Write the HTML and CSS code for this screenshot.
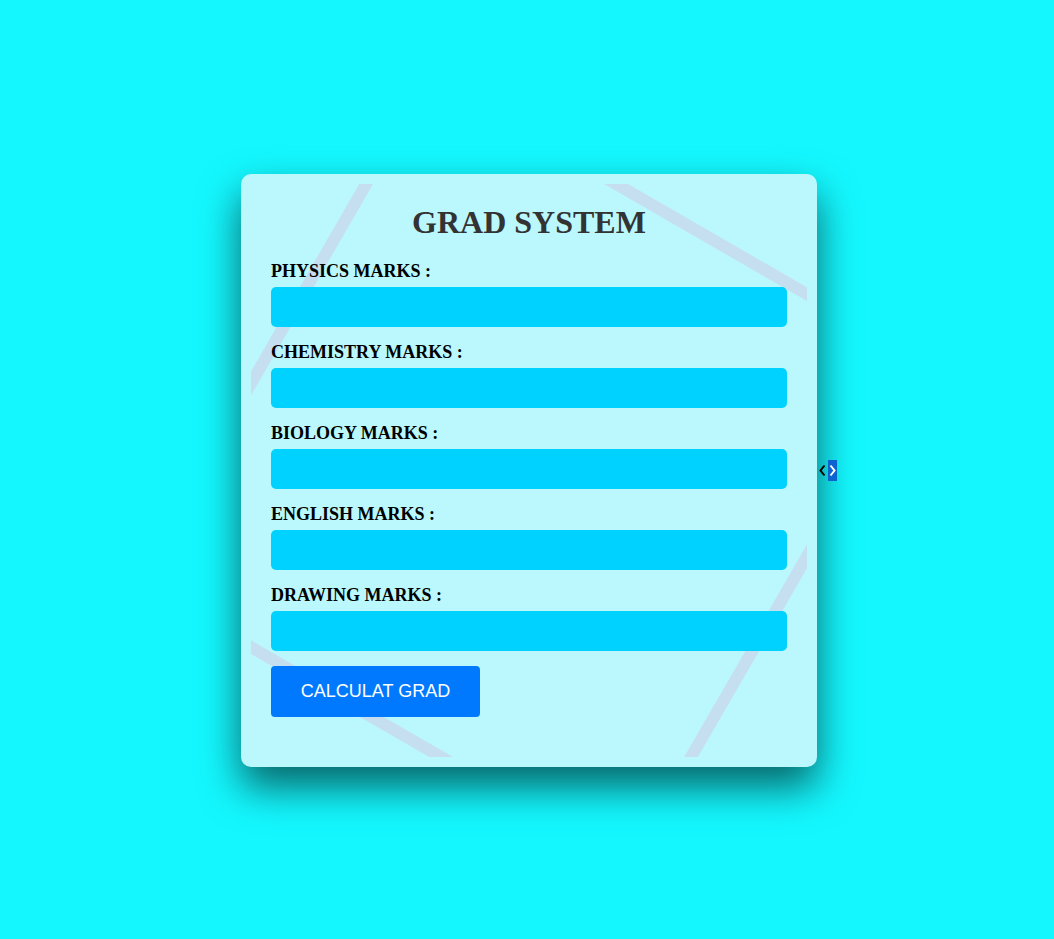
FILE: index.html
```html
<!DOCTYPE html>
<html lang="en">
<head>
<meta charset="utf-8">
<title>Grad System</title>
<link rel="stylesheet" href="styles.css">
</head>
<body>
<main class="page">
  <div class="card">
    <div class="deco">
      <svg class="deco-svg" viewBox="0 0 556 573" width="556" height="573" aria-hidden="true">
        <g stroke="#c6dff0" stroke-width="12" fill="none">
          <line x1="215" y1="-173" x2="-185" y2="520"/>
          <line x1="105" y1="-150" x2="625" y2="150"/>
          <line x1="-260" y1="313" x2="346" y2="663"/>
          <line x1="340" y1="746" x2="640" y2="227"/>
        </g>
      </svg>
    </div>
    <form class="form">
      <h1 class="title">GRAD SYSTEM</h1>
      <label class="label">PHYSICS MARKS :</label>
      <input class="field" type="text">
      <label class="label">CHEMISTRY MARKS :</label>
      <input class="field" type="text">
      <label class="label">BIOLOGY MARKS :</label>
      <input class="field" type="text">
      <label class="label">ENGLISH MARKS :</label>
      <input class="field" type="text">
      <label class="label">DRAWING MARKS :</label>
      <input class="field" type="text">
      <button class="btn" type="button">CALCULAT GRAD</button>
    </form>
    <span class="arrows">
      <svg class="arr-l" width="11" height="21" viewBox="0 0 11 21" aria-hidden="true"><polyline points="7.5,5.5 3.5,10.5 7.5,15.5" fill="none" stroke="#000" stroke-width="2"/></svg>
      <svg class="arr-r" width="9" height="21" viewBox="0 0 9 21" aria-hidden="true"><polyline points="2.5,5.5 6.5,10.5 2.5,15.5" fill="none" stroke="#fff" stroke-width="2"/></svg>
    </span>
  </div>
</main>
</body>
</html>
```
FILE: styles.css
```css
html, body {
  margin: 0;
  padding: 0;
  height: 100%;
}
body {
  background: #14f7fe;
  font-family: "Liberation Serif", "Times New Roman", serif;
}
.page {
  height: 939px;
  display: flex;
  align-items: center;
  justify-content: center;
  padding-left: 4px;
  padding-top: 2px;
  box-sizing: border-box;
}
.card {
  position: relative;
  width: 576px;
  box-sizing: border-box;
  padding: 30px 30px 50px;
  background: #bbf8fe;
  border-radius: 10px;
  box-shadow: 0 20px 40px rgba(0, 0, 0, 0.6);
}
.deco {
  position: absolute;
  left: 10px;
  top: 10px;
  right: 10px;
  bottom: 10px;
  overflow: hidden;
}
.deco-svg {
  display: block;
}
.form {
  position: relative;
  display: flex;
  flex-direction: column;
  align-items: stretch;
  margin: 0;
}
.title {
  margin: 0 0 21px;
  font-size: 32px;
  line-height: 36px;
  font-weight: bold;
  text-align: center;
  color: #333333;
}
.label {
  display: block;
  font-size: 18px;
  line-height: 20px;
  font-weight: bold;
  color: #000;
  margin-bottom: 6px;
}
.field {
  display: block;
  height: 40px;
  box-sizing: border-box;
  border: none;
  border-radius: 5px;
  background: #00d2ff;
  margin: 0 0 15px;
  padding: 0 10px;
  font-size: 16px;
  outline: none;
}
.btn {
  align-self: flex-start;
  width: 209px;
  height: 51px;
  border: none;
  border-radius: 4px;
  background: #0079ff;
  color: #ffffff;
  font-family: "Liberation Sans", Arial, sans-serif;
  font-size: 18px;
  padding: 0;
  cursor: pointer;
}
.arrows {
  position: absolute;
  left: 100%;
  top: 286px;
  display: flex;
  align-items: stretch;
  height: 21px;
}
.arr-l {
  display: block;
}
.arr-r {
  display: block;
  background: #0c62cf;
}
```
